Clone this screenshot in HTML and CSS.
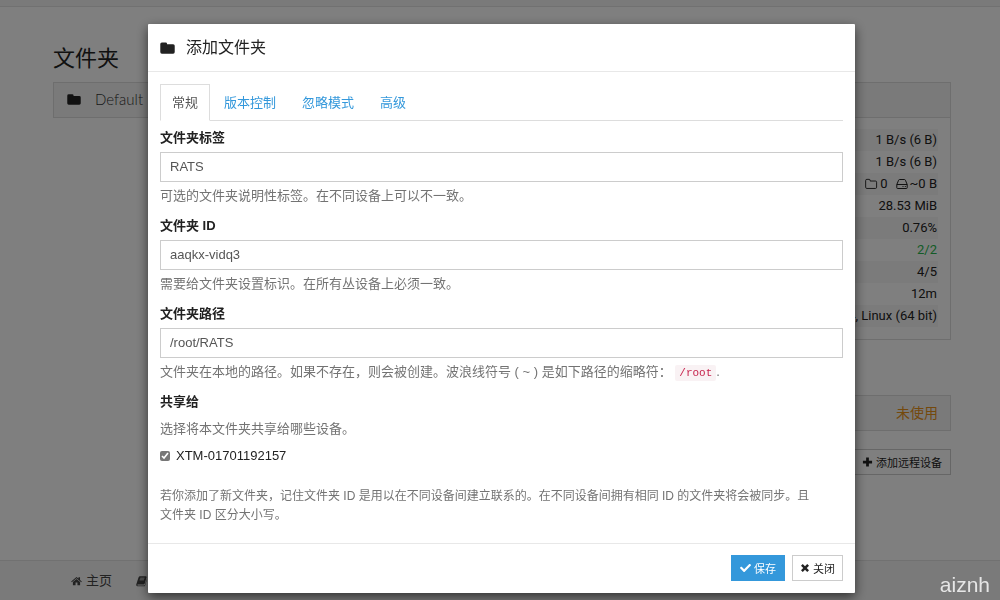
FILE: index.html
```html
<!DOCTYPE html>
<html lang="zh-CN">
<head>
<meta charset="utf-8">
<title>添加文件夹</title>
<link rel="stylesheet" href="styles.css">
</head>
<body>
<svg class="defs" aria-hidden="true">
  <symbol id="folder" viewBox="0 0 16 14"><path d="M2 1h4a1.500 1.500 0 0 1 1.500 1.500V3H14a1.700 1.700 0 0 1 1.700 1.700v6.600A1.700 1.700 0 0 1 14 13H2a1.700 1.700 0 0 1-1.700-1.700V2.700A1.700 1.700 0 0 1 2 1z"/></symbol>
  <symbol id="folder-line" viewBox="0 0 14 12"><path d="M2 1h2.500q1 0 1 1v.8h5.700q1.300 0 1.300 1.200v5.500q0 1.300-1.300 1.300H2q-1.300 0-1.300-1.300V2.300Q.7 1 2 1z" fill="none" stroke="currentColor"/></symbol>
  <symbol id="disk" viewBox="0 0 12 12"><path d="M.8 6.500h10.400v3.300q0 .7-.7.700h-9q-.7 0-.7-.7zL2.600 2.200q.2-.7 1-.7h4.800q.8 0 1 .7l1.800 4.300M6.500 8.500h1M8.800 8.500h1" fill="none" stroke="currentColor"/></symbol>
  <symbol id="plus" viewBox="0 0 12 12"><path d="M4.500 1h3v3.500H11v3H7.500V11h-3V7.500H1v-3h3.500z"/></symbol>
  <symbol id="home" viewBox="0 0 14 12"><path d="M7 .8l2.500 2.100V1.300h2v3.300l2.300 2-.8.9L7 2.500 1 7.500l-.8-.9zM7 3.600l4.600 3.800v3.900H8.200V8H5.800v3.300H2.400V7.400z"/></symbol>
  <symbol id="book" viewBox="0 0 14 14"><path fill-rule="evenodd" d="M5 1h7.500q1.300.3.900 1.600L11 10.500q-.4 1-1.400 1H2.300q-.9 0-.8.7.3.500 1 .5h7.900q.6 0 .8-.6L13.800 4q.3.600 0 1.400l-2.200 7.200q-.4 1.200-1.500 1.200h-8Q.2 13.500.3 11.500l2.900-9Q3.800 1 5 1zm.2 2.700h5.500l.3-.9H5.500zm-.7 2.200H10l.3-.9H4.800z"/></symbol>
  <symbol id="check" viewBox="0 0 512 512"><path d="M173.898 439.404l-166.400-166.400c-9.997-9.997-9.997-26.206 0-36.204l36.203-36.204c9.997-9.998 26.207-9.998 36.204 0L192 312.690 432.095 72.596c9.997-9.997 26.207-9.997 36.204 0l36.203 36.204c9.997 9.997 9.997 26.206 0 36.204l-294.400 294.401c-9.998 9.997-26.207 9.997-36.204-.001z"/></symbol>
  <symbol id="times" viewBox="0 0 12 12"><path d="M3.300 1.200L6 3.900l2.700-2.700 2.100 2.100L8.100 6l2.700 2.700-2.100 2.100L6 8.100l-2.700 2.700-2.100-2.100L3.900 6 1.200 3.300z"/></symbol>
</svg>

<div class="page">
  <nav class="navbar"></nav>
  <main class="container">
    <section>
      <h3 class="page-title">文件夹</h3>
      <button class="panel-heading" type="button"><svg class="icon-lg"><use href="#folder"/></svg><span class="panel-name">Default</span></button>
    </section>
    <section class="devices">
      <div class="panel">
        <div class="panel-heading panel-top"></div>
        <table class="stats">
          <tr><td>1 B/s (6 B)</td></tr>
          <tr><td>1 B/s (6 B)</td></tr>
          <tr><td><span class="totals"><svg class="icon-line"><use href="#folder-line"/></svg><span class="count">0</span><svg class="icon-disk"><use href="#disk"/></svg><span>~0 B</span></span></td></tr>
          <tr><td>28.53 MiB</td></tr>
          <tr><td>0.76%</td></tr>
          <tr><td class="ok">2/2</td></tr>
          <tr><td>4/5</td></tr>
          <tr><td>12m</td></tr>
          <tr><td>4, Linux (64 bit)</td></tr>
        </table>
      </div>
      <button class="panel-heading remote" type="button">未使用</button>
      <button class="btn" type="button"><svg class="icon-sm"><use href="#plus"/></svg>添加远程设备</button>
    </section>
  </main>
  <footer class="bottom-bar">
    <a class="bar-link" href="#"><svg class="icon-sm"><use href="#home"/></svg>主页</a>
    <a class="bar-link" href="#" aria-label="文档"><svg class="icon-sm"><use href="#book"/></svg></a>
  </footer>
</div>

<div class="backdrop">
  <form class="modal" role="dialog" aria-labelledby="title">
    <header class="modal-header"><svg class="icon-title"><use href="#folder"/></svg><h4 class="modal-title" id="title">添加文件夹</h4></header>
    <div class="modal-body">
      <nav class="tabs">
        <a class="tab active" href="#">常规</a>
        <a class="tab" href="#">版本控制</a>
        <a class="tab" href="#">忽略模式</a>
        <a class="tab" href="#">高级</a>
      </nav>
      <div class="group">
        <label class="label" for="name">文件夹标签</label>
        <input class="field" id="name" type="text" value="RATS">
        <p class="help">可选的文件夹说明性标签。在不同设备上可以不一致。</p>
      </div>
      <div class="group">
        <label class="label" for="fid">文件夹 ID</label>
        <input class="field" id="fid" type="text" value="aaqkx-vidq3">
        <p class="help">需要给文件夹设置标识。在所有丛设备上必须一致。</p>
      </div>
      <div class="group">
        <label class="label" for="path">文件夹路径</label>
        <input class="field" id="path" type="text" value="/root/RATS">
        <p class="help">文件夹在本地的路径。如果不存在，则会被创建。波浪线符号 ( ~ ) 是如下路径的缩略符： <code class="code">/root</code>.</p>
      </div>
      <div class="group share" role="group" aria-labelledby="share">
        <span class="label" id="share">共享给</span>
        <p class="help">选择将本文件夹共享给哪些设备。</p>
        <label class="device"><input class="tick" type="checkbox" checked>XTM-01701192157</label>
      </div>
      <p class="note">若你添加了新文件夹，记住文件夹 ID 是用以在不同设备间建立联系的。在不同设备间拥有相同 ID 的文件夹将会被同步。且<br>文件夹 ID 区分大小写。</p>
    </div>
    <footer class="modal-footer">
      <button class="btn primary" type="button"><svg class="icon-sm"><use href="#check"/></svg>保存</button>
      <button class="btn close" type="button"><svg class="icon-xs"><use href="#times"/></svg>关闭</button>
    </footer>
  </form>
</div>
<div class="watermark">aiznh</div>
</body>
</html>
```

FILE: styles.css
```css
* { box-sizing: border-box; }
body {
  margin: 0;
  overflow: hidden;
  background: #fff;
  color: #222;
  font: 13px/18px "Liberation Sans", "Noto Sans CJK SC", sans-serif;
}
h3, h4, p { margin: 0; font-weight: 400; }
a { color: inherit; text-decoration: none; }
button { font-family: inherit; color: inherit; }
svg { flex: none; fill: currentColor; }
.defs { display: none; }
.icon-lg { width: 14px; height: 13px; }
.icon-title { width: 15px; height: 14px; }
.icon-sm { width: 11px; height: 12px; }
.icon-xs { width: 10px; height: 10px; }
.icon-line { width: 13px; height: 12px; }
.icon-disk { width: 12px; height: 12px; }

.page { display: flex; flex-direction: column; min-height: 100vh; }
.navbar { height: 7px; background: #f5f5f5; border-bottom: 1px solid #e2e2e2; }
.container {
  flex: 1;
  display: grid;
  grid-template-columns: 1fr 1fr;
  gap: 24px;
  padding: 36px 49px 0 53px;
}
.page-title { margin-bottom: 8px; font-size: 22px; line-height: 31px; }
.panel-heading {
  display: flex;
  align-items: center;
  gap: 14px;
  width: 100%;
  height: 36px;
  padding: 0 14px 2px 13px;
  border: 1px solid #ddd;
  background: #f5f5f5;
  font-size: 14px;
}
.panel-name { color: #333; font-family: Lato, sans-serif; font-size: 15px; font-weight: 300; }
.devices { display: flex; flex-direction: column; align-items: flex-end; padding-top: 39px; }
.panel { width: 100%; padding-bottom: 12px; border: 1px solid #ddd; }
.panel-top { height: 35px; border-width: 0 0 1px; margin-bottom: 11px; }
.stats { width: calc(100% - 24px); margin: 0 12px; border-collapse: collapse; font-family: Roboto, sans-serif; }
.stats td { height: 22px; padding: 0 1px; text-align: right; line-height: 18px; }
.stats tr:nth-child(odd) { background: #f7f7f7; }
.totals { display: flex; align-items: center; justify-content: flex-end; gap: 2px; }
.count { margin-right: 6px; }
.ok { color: #29b74e; }
.remote { justify-content: flex-end; margin: 55px 0 18px; padding: 0 12px 2px; color: #e8921a; }
.btn {
  display: flex;
  align-items: center;
  gap: 3px;
  height: 26px;
  padding: 0 8px;
  border: 1px solid #ccc;
  background: #fff;
  font-size: 11px;
}
.primary { border-color: #3498db; background: #3498db; color: #fff; }
.close { padding: 0 7px; }
.bottom-bar {
  display: flex;
  gap: 24px;
  height: 40px;
  padding: 0 71px;
  border-top: 1px solid #e2e2e2;
  background: #f5f5f5;
  color: #444;
}
.bar-link { display: flex; align-items: center; gap: 4px; }

.backdrop {
  position: fixed;
  inset: 0;
  overflow: hidden;
  padding: 24px 145px 7px 148px;
  background: rgba(0, 0, 0, .5);
}
.modal { border-radius: 1px; background: #fff; box-shadow: 0 4px 12px rgba(0, 0, 0, .6); }
.modal-header {
  display: flex;
  align-items: center;
  gap: 11px;
  height: 48px;
  padding: 1px 12px 0;
  border-bottom: 1px solid #e8e8e8;
}
.modal-title { font-size: 16px; line-height: 20px; }
.modal-body { display: flex; flex-direction: column; gap: 12px; padding: 12px 12px 18px; }
.tabs { display: flex; gap: 2px; margin-bottom: -4px; border-bottom: 1px solid #ddd; }
.tab { margin-bottom: -1px; padding: 9px 11px 8px; border: 1px solid transparent; color: #3498db; }
.active { border-color: #ddd #ddd #fff; color: #555; }
.group { display: flex; flex-direction: column; gap: 5px; }
.label { font-weight: 700; }
.field {
  width: 100%;
  height: 30px;
  padding: 0 9px 1px;
  border: 1px solid #ccc;
  background: #fff;
  color: #555;
  font: inherit;
}
.help, .note { color: #737373; }
.code {
  padding: 2px 4px;
  border-radius: 2px;
  background: #f9f2f4;
  color: #c7254e;
  font: 11px "Liberation Mono", monospace;
}
.share { gap: 9px; }
.device { display: flex; align-items: center; gap: 6px; }
.tick { width: 10px; height: 10px; margin: 0; accent-color: #777; }
.note { padding-top: 10px; font-size: 12px; line-height: 19px; }
.modal-footer {
  display: flex;
  justify-content: flex-end;
  gap: 7px;
  padding: 11px 12px 12px;
  border-top: 1px solid #e8e8e8;
}
.watermark {
  position: fixed;
  right: 10px;
  bottom: 2px;
  color: #e6e6e6;
  font-size: 21px;
  line-height: 26px;
}
```
